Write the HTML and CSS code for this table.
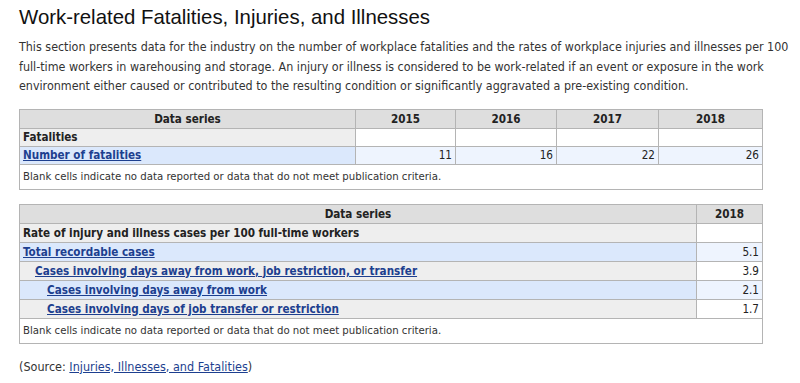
FILE: index.html
```html
<!DOCTYPE html>
<html lang="en">
<head>
<meta charset="utf-8">
<title>Work-related Fatalities, Injuries, and Illnesses</title>
<link rel="stylesheet" href="styles.css">
</head>
<body>
<div class="section">
  <h2 class="heading">Work-related Fatalities, Injuries, and Illnesses</h2>
  <p class="intro">This section presents data for the industry on the number of workplace fatalities and the rates of workplace injuries and illnesses per 100 full-time workers in warehousing and storage. An injury or illness is considered to be work-related if an event or exposure in the work environment either caused or contributed to the resulting condition or significantly aggravated a pre-existing condition.</p>

  <table class="data">
    <colgroup>
      <col class="c-series-wide">
      <col class="c-2015"><col class="c-2016"><col class="c-2017"><col class="c-2018">
    </colgroup>
    <thead>
      <tr><th>Data series</th><th>2015</th><th>2016</th><th>2017</th><th>2018</th></tr>
    </thead>
    <tbody>
      <tr class="cat"><td class="label">Fatalities</td><td class="num"></td><td class="num"></td><td class="num"></td><td class="num"></td></tr>
      <tr class="alt"><td class="label"><a href="#">Number of fatalities</a></td><td class="num">11</td><td class="num">16</td><td class="num">22</td><td class="num">26</td></tr>
    </tbody>
    <tfoot>
      <tr><td colspan="5">Blank cells indicate no data reported or data that do not meet publication criteria.</td></tr>
    </tfoot>
  </table>

  <table class="data second">
    <colgroup>
      <col class="c-series"><col class="c-year-last">
    </colgroup>
    <thead>
      <tr><th>Data series</th><th>2018</th></tr>
    </thead>
    <tbody>
      <tr class="cat"><td class="label">Rate of injury and illness cases per 100 full-time workers</td><td class="num"></td></tr>
      <tr class="alt"><td class="label"><a href="#">Total recordable cases</a></td><td class="num">5.1</td></tr>
      <tr class="cat"><td class="label lvl1"><a href="#">Cases involving days away from work, job restriction, or transfer</a></td><td class="num">3.9</td></tr>
      <tr class="alt"><td class="label lvl2"><a href="#">Cases involving days away from work</a></td><td class="num">2.1</td></tr>
      <tr class="cat"><td class="label lvl2"><a href="#">Cases involving days of job transfer or restriction</a></td><td class="num">1.7</td></tr>
    </tbody>
    <tfoot>
      <tr><td colspan="2">Blank cells indicate no data reported or data that do not meet publication criteria.</td></tr>
    </tfoot>
  </table>

  <p class="source">(Source: <a href="#">Injuries, Illnesses, and Fatalities</a>)</p>
</div>
</body>
</html>
```
FILE: styles.css
```css
html, body {
  margin: 0;
  padding: 0;
  background: #ffffff;
}

.section {
  padding: 4px 4px 0 19px;
  font-family: "DejaVu Sans Condensed", "DejaVu Sans", sans-serif;
  color: #333333;
}

.heading {
  margin: 0;
  font-family: "Liberation Sans", Arial, sans-serif;
  font-weight: normal;
  font-size: 20.4px;
  line-height: 26px;
  color: #111111;
}

.intro {
  margin: 7px 0 0;
  font-size: 12.4px;
  line-height: 19.5px;
  color: #333333;
}

.data {
  border-collapse: collapse;
  width: 743px;
  margin-top: 13px;
  font-size: 11.6px;
  color: #222222;
  table-layout: fixed;
}

.data.second {
  margin-top: 14px;
}

.c-series-wide { width: 336px; }
.c-2015 { width: 100px; }
.c-2016 { width: 101px; }
.c-2017 { width: 102px; }
.c-2018 { width: 104px; }
.c-series { width: 677px; }
.c-year-last { width: 66px; }

.data th,
.data td {
  border: 1px solid #b4b4b4;
  padding: 0 3px;
  height: 17px;
  line-height: 16px;
  vertical-align: middle;
}

.data.second tbody td {
  height: 18px;
}

.data thead th {
  background: #dedede;
  font-weight: bold;
  text-align: center;
  height: 18px;
}

.data .label {
  font-weight: bold;
  text-align: left;
}

.data .num {
  text-align: right;
  background: #ffffff;
}

.data tr.cat .label { background: #eeeeee; }
.data tr.alt .label { background: #dbe8fc; }
.data tr.alt .num { background: #eef4fe; }

.data .lvl1 { padding-left: 15px; }
.data .lvl2 { padding-left: 27px; }

.data a {
  color: #1d3f8f;
  text-decoration: underline;
}

.data tfoot td {
  background: #ffffff;
  padding: 4px 3px 3px;
  height: 17px;
  font-size: 11.3px;
  color: #333333;
}

.source {
  margin: 14px 0 0;
  font-size: 12.5px;
  line-height: 18px;
  color: #333333;
}

.source a {
  color: #1d3f8f;
}
```
